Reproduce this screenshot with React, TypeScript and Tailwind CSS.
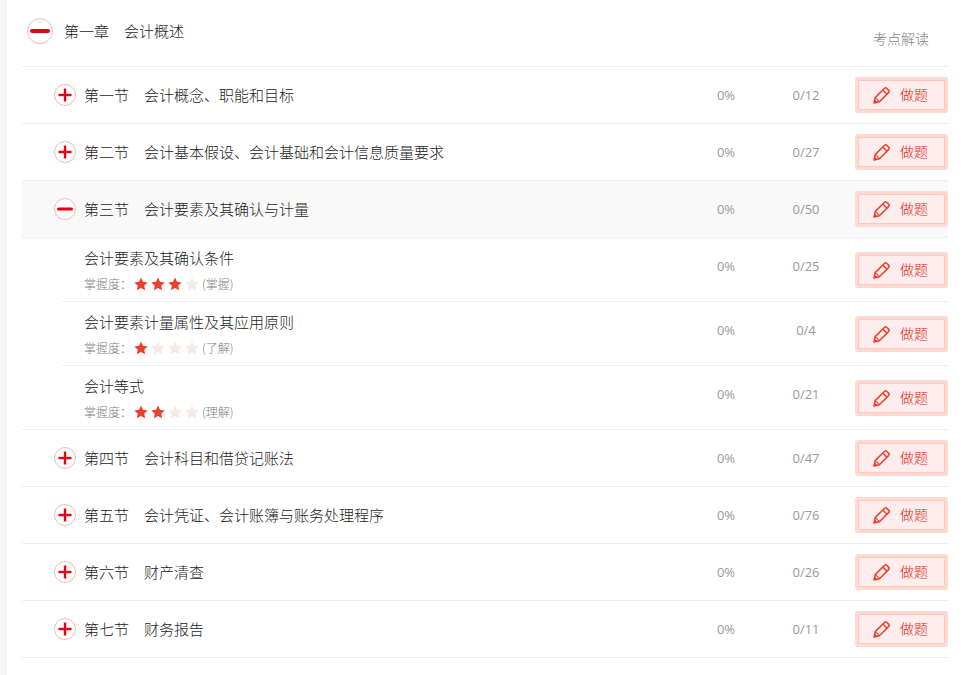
import React from "react";

const cjk = "font-['Noto_Sans_CJK_SC','Liberation_Sans',sans-serif]";

function Toggle({ big, open }: { big?: boolean; open?: boolean }) {
  const size = big ? 26 : 22;
  const c = size / 2;
  const arm = big ? 8 : 6.5;
  const sw = big ? 4 : open ? 3 : 2.4;
  return (
    <svg width={size} height={size} viewBox={`0 0 ${size} ${size}`} className="shrink-0">
      <circle cx={c} cy={c} r={c - 0.5} fill="#fff" stroke="#f6b9ae" strokeWidth="1" />
      <line x1={c - arm} y1={c} x2={c + arm} y2={c} stroke="#e60012" strokeWidth={sw} strokeLinecap={open ? "round" : "butt"} />
      {!open && <line x1={c} y1={c - arm} x2={c} y2={c + arm} stroke="#e60012" strokeWidth={sw} />}
    </svg>
  );
}

function PencilIcon() {
  return (
    <svg width="18" height="18" viewBox="0 0 18 18" fill="none" className="shrink-0">
      <path d="M1 17 L2.2 11.6 L11.6 2.2 Q12.6 1.2 13.6 2.2 L15.8 4.4 Q16.8 5.4 15.8 6.4 L6.4 15.8 Z" stroke="#e8412f" strokeWidth="1.5" strokeLinejoin="round" />
      <path d="M9.8 4 L14 8.2" stroke="#e8412f" strokeWidth="1.5" />
      <path d="M2.4 11.6 L6.4 15.6" stroke="#e8412f" strokeWidth="1.2" />
      <path d="M1 17 L1.7 13.6 L4.4 16.3 Z" fill="#e8412f" />
    </svg>
  );
}

function DoButton() {
  return (
    <div className="w-[87px] h-[30px] mx-[3px] flex items-center border border-[#ffc9b5] bg-[#ffecec] ring-[3px] ring-[#ffd9d4] rounded-[1px] pl-[14px] shrink-0">
      <PencilIcon />
      <span className={`ml-[9px] -mt-[2px] text-[14px] leading-none font-light text-[#dc2a18] ${cjk}`}>做题</span>
    </div>
  );
}

function Stats({ total, sub }: { total: string; sub?: boolean }) {
  return (
    <div className={`flex items-center text-[13px] text-[#999] font-['Open_Sans',sans-serif] ${sub ? "-mt-[6px]" : "mt-[2px]"}`}>
      <span className="w-[80px] text-center">0%</span>
      <span className="w-[80px] text-center">{total}</span>
    </div>
  );
}

function Section({ name, title, total, open }: { name: string; title: string; total: string; open?: boolean }) {
  return (
    <div className={`flex items-center border-b border-[#eeeeee] ${open ? "bg-[repeating-conic-gradient(#f6f6f6_0_25%,#fcfcfc_0_50%)] bg-[length:2px_2px] border-t -mt-px h-[58px]" : "h-[57px]"}`}>
      <div className="w-[32px] shrink-0" />
      <Toggle open={open} />
      <span className={`ml-[8px] flex-1 text-[15px] font-light text-[#1c1c1c] ${cjk}`}>{name}　{title}</span>
      <Stats total={total} />
      <div className="w-[9px]" />
      <DoButton />
    </div>
  );
}

function Star({ on }: { on: boolean }) {
  return (
    <svg width="14" height="14" viewBox="0 0 24 24" className="shrink-0">
      <polygon points="12,1 15.4,8.3 23.4,9.3 17.5,14.8 19.1,22.8 12,18.8 4.9,22.8 6.5,14.8 0.6,9.3 8.6,8.3" fill={on ? "#e8412f" : "#f8e9e9"} />
    </svg>
  );
}

function Sub({ title, total, stars, level, last }: { title: string; total: string; stars: number; level: string; last?: boolean }) {
  return (
    <div className={`h-[64px] border-b border-[#eeeeee] flex items-center ${last ? "" : "ml-[40px]"}`}>
      <div className={`${last ? "pl-[62px]" : "pl-[22px]"} mt-[2px] flex-1 flex flex-col ${cjk}`}>
        <span className="text-[15px] leading-[22px] font-light text-[#1c1c1c]">{title}</span>
        <div className="mt-[5px] flex items-center h-[20px] text-[12px] font-light text-[#7f7f7f]">
          <span className="w-[50px]">掌握度：</span>
          <div className="flex gap-[3px]">
            {[0, 1, 2, 3].map((i) => (
              <Star key={i} on={i < stars} />
            ))}
          </div>
          <span className="ml-[3px]">({level})</span>
        </div>
      </div>
      <Stats total={total} sub />
      <div className="w-[9px]" />
      <DoButton />
    </div>
  );
}

export default function App() {
  return (
    <div className="h-[675px] w-full overflow-hidden bg-white flex">
      <div className="w-[7px] bg-[#f5f5f5] shrink-0" />
      <div className="ml-[15px] w-[926px]">
        <div className="h-[67px] border-b border-[#eeeeee] relative">
          <div className="flex items-center pt-[18px] pl-[5px]">
            <Toggle big open />
            <span className={`ml-[11px] text-[15px] font-light text-[#1c1c1c] ${cjk}`}>第一章　会计概述</span>
          </div>
          <span className={`absolute right-[19px] top-[28px] text-[14px] font-light text-[#7f7f7f] ${cjk}`}>考点解读</span>
        </div>
        <Section name="第一节" title="会计概念、职能和目标" total="0/12" />
        <Section name="第二节" title="会计基本假设、会计基础和会计信息质量要求" total="0/27" />
        <Section name="第三节" title="会计要素及其确认与计量" total="0/50" open />
        <Sub title="会计要素及其确认条件" total="0/25" stars={3} level="掌握" />
        <Sub title="会计要素计量属性及其应用原则" total="0/4" stars={1} level="了解" />
        <Sub title="会计等式" total="0/21" stars={2} level="理解" last />
        <Section name="第四节" title="会计科目和借贷记账法" total="0/47" />
        <Section name="第五节" title="会计凭证、会计账簿与账务处理程序" total="0/76" />
        <Section name="第六节" title="财产清查" total="0/26" />
        <Section name="第七节" title="财务报告" total="0/11" />
      </div>
    </div>
  );
}
